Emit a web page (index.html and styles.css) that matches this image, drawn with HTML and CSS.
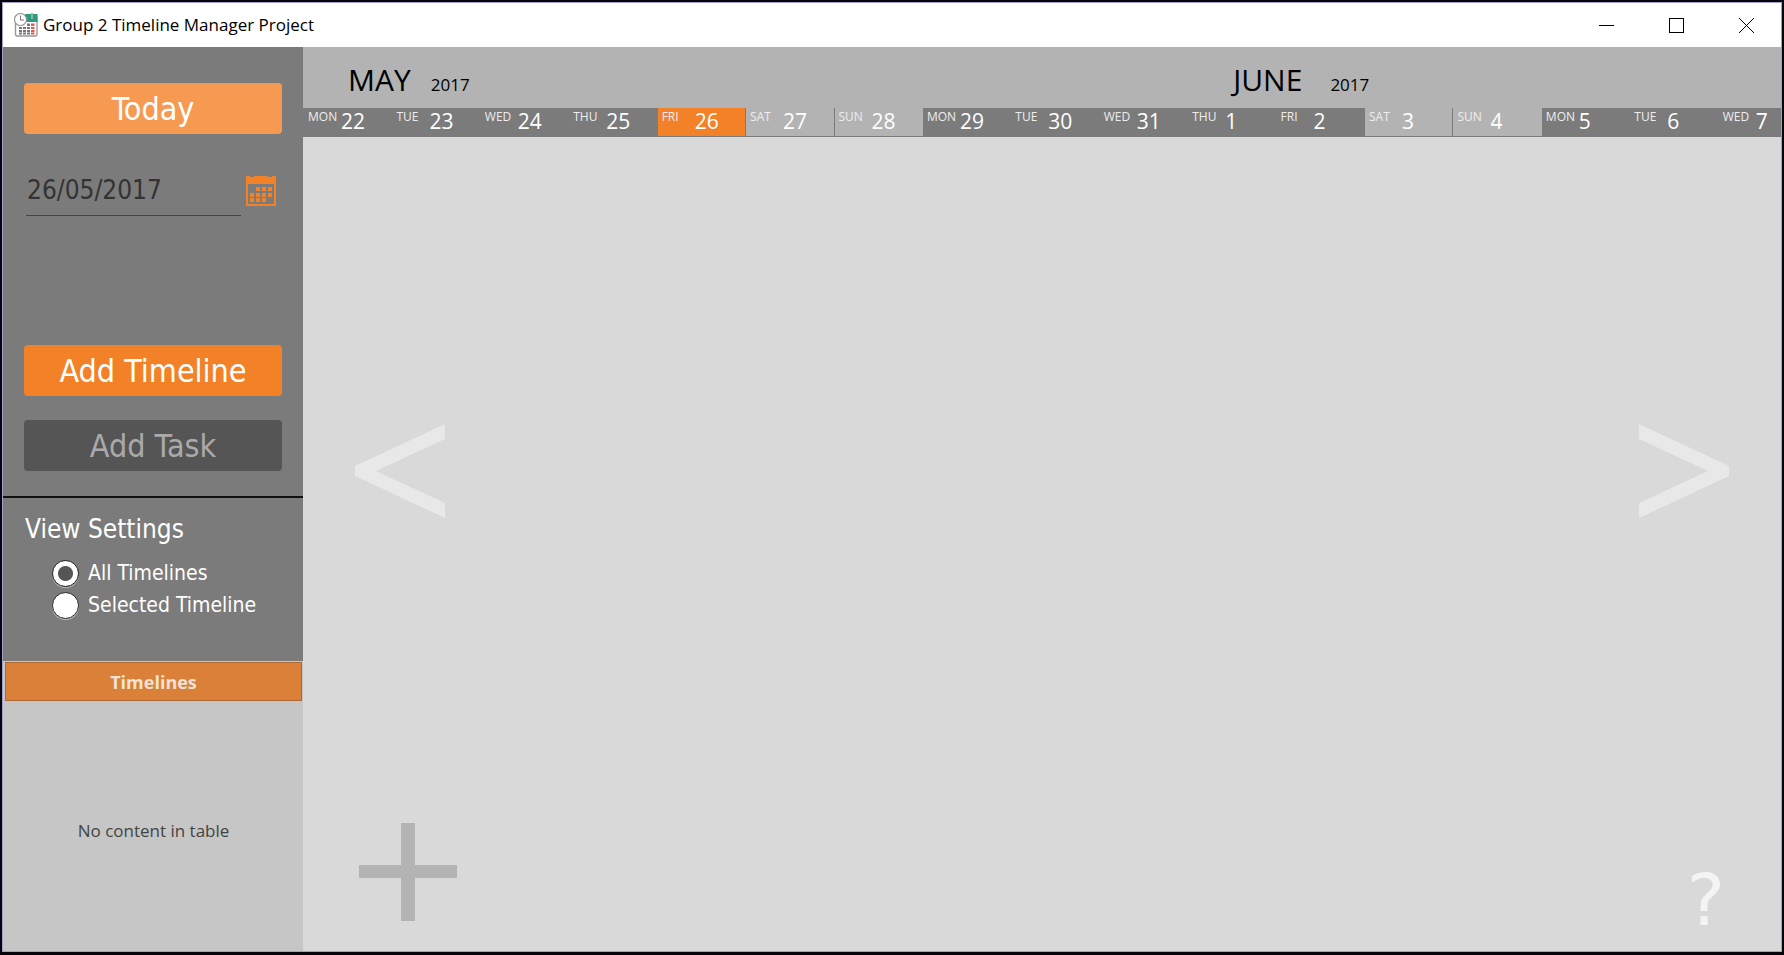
FILE: index.html
```html
<!DOCTYPE html>
<html lang="en">
<head>
<meta charset="utf-8">
<title>Group 2 Timeline Manager Project</title>
<link rel="stylesheet" href="styles.css">
</head>
<body>
<div class="window">
  <header class="titlebar">
    <svg class="app-icon" viewBox="0 0 24 24" aria-hidden="true">
      <rect x="1.5" y="3" width="21.5" height="20" rx="1.5" fill="#fff" stroke="#999" stroke-width="1.4"/>
      <path d="M11 1h12.500v8H11z" fill="#2a9b7c"/>
      <path d="M17 0h2v6h-2z" fill="#8fb5a9"/>
      <path d="M5 14h3v2H5zM9 14h3v2H9zM13 14h3v2h-3zM5 17h3v2H5zM9 17h3v2H9zM13 17h3v2h-3zM5 19.500h3v2H5zM9 19.500h3v2H9zM13 19.500h3v2h-3zM13 10.500h3v2.500h-3z" fill="#777"/>
      <path d="M17 10.500h3.500v2.500H17zM17 14h3.500v2H17zM17 17h3.500v2H17zM17 19.500h3.500v2H17z" fill="#e05a4f"/>
      <circle cx="6.500" cy="6.500" r="6" fill="#fff" stroke="#999" stroke-width="1.2"/>
      <path d="M6.500 2.500v4.500H10" fill="none" stroke="#777"/>
    </svg>
    <h1 class="title">Group 2 Timeline Manager Project</h1>
    <div class="window-controls">
      <button class="window-button" aria-label="Minimize"><svg viewBox="0 0 15 15" shape-rendering="crispEdges"><path d="M0 7.5h15"/></svg></button>
      <button class="window-button" aria-label="Maximize"><svg viewBox="0 0 15 15" shape-rendering="crispEdges"><path d="M.5.5h14v14H.5z"/></svg></button>
      <button class="window-button" aria-label="Close"><svg viewBox="0 0 15 15"><path d="M0 0l15 15M15 0L0 15"/></svg></button>
    </div>
  </header>
  <div class="body">
    <aside class="sidebar">
      <section class="actions">
        <button class="action today">Today</button>
        <div class="date-picker">
          <input class="date" type="text" value="26/05/2017" aria-label="Date">
          <button class="calendar" aria-label="Open calendar">
            <svg viewBox="0 0 30 30"><path fill="#f38127" fill-rule="evenodd" d="M0 0h4v1h4V0h14v1h4V0h4v30H0zM2 8v20h26V8zM10 11h4v4h-4zM16 11h4v4h-4zM22 11h4v4h-4zM4 17h4v4H4zM10 17h4v4h-4zM16 17h4v4h-4zM22 17h4v4h-4zM4 22h4v4H4zM10 22h4v4h-4zM16 22h4v4h-4z"/></svg>
          </button>
        </div>
        <button class="action add-timeline">Add Timeline</button>
        <button class="action" disabled>Add Task</button>
      </section>
      <fieldset class="settings">
        <legend class="legend">View Settings</legend>
        <label class="option"><input class="radio" type="radio" name="view" checked>All Timelines</label>
        <label class="option"><input class="radio" type="radio" name="view">Selected Timeline</label>
      </fieldset>
      <table class="timelines">
        <thead><tr><th>Timelines</th></tr></thead>
        <tbody><tr><td>No content in table</td></tr></tbody>
      </table>
    </aside>
    <main class="main">
      <div class="months columns">
        <h2 class="month may">MAY <span class="year">2017</span></h2>
        <h2 class="month june">JUNE <span class="year">2017</span></h2>
      </div>
      <ol class="days columns">
        <li class="day"><span class="weekday">MON</span>22</li>
        <li class="day"><span class="weekday">TUE</span>23</li>
        <li class="day"><span class="weekday">WED</span>24</li>
        <li class="day"><span class="weekday">THU</span>25</li>
        <li class="day current"><span class="weekday">FRI</span>26</li>
        <li class="day weekend"><span class="weekday">SAT</span>27</li>
        <li class="day weekend"><span class="weekday">SUN</span>28</li>
        <li class="day"><span class="weekday">MON</span>29</li>
        <li class="day"><span class="weekday">TUE</span>30</li>
        <li class="day"><span class="weekday">WED</span>31</li>
        <li class="day"><span class="weekday">THU</span>1</li>
        <li class="day"><span class="weekday">FRI</span>2</li>
        <li class="day weekend"><span class="weekday">SAT</span>3</li>
        <li class="day weekend"><span class="weekday">SUN</span>4</li>
        <li class="day"><span class="weekday">MON</span>5</li>
        <li class="day"><span class="weekday">TUE</span>6</li>
        <li class="day"><span class="weekday">WED</span>7</li>
      </ol>
      <div class="canvas">
        <div class="pager">
          <button class="arrow" aria-label="Previous"><svg viewBox="0 0 90 96"><path d="M90 1v15L21 48l69 32v15L0 53V43z"/></svg></button>
          <button class="arrow" aria-label="Next"><svg viewBox="0 0 90 96"><path d="M0 1v15l69 32L0 80v15l90-42V43z"/></svg></button>
        </div>
        <div class="tools">
          <button class="add" aria-label="Add"><svg viewBox="0 0 98 98"><path d="M42 0h14v42h42v13H56v43H42V55H0V42h42z"/></svg></button>
          <button class="help">?</button>
        </div>
      </div>
    </main>
  </div>
</div>
</body>
</html>
```
FILE: styles.css
```css
* { box-sizing: border-box; }
body {
  margin: 0;
  padding: 2px 2px 3px;
  height: 100vh;
  background: #05050a;
  font-family: "Open Sans", "Noto Sans", sans-serif;
}
button {
  border: 0;
  padding: 0;
  background: none;
  font-family: inherit;
}
svg { display: block; }
h1, h2 { margin: 0; font-weight: 400; }
.window {
  height: 100%;
  display: flex;
  flex-direction: column;
  border: 1px solid #a49fd0;
}
.titlebar {
  flex: none;
  display: flex;
  align-items: center;
  height: 44px;
  padding-left: 11px;
  background: #fff;
}
.app-icon { width: 24px; height: 24px; margin-right: 5px; }
.title { flex: 1; font-size: 17px; line-height: 24px; color: #000; }
.window-controls { display: flex; height: 100%; }
.window-button {
  width: 70px;
  display: flex;
  align-items: center;
  justify-content: center;
}
.window-button svg { width: 15px; height: 15px; fill: none; stroke: #000; }
.body { flex: 1; min-height: 0; display: flex; }
.sidebar {
  flex: none;
  width: 300px;
  display: flex;
  flex-direction: column;
  background: #7b7b7b;
  font-family: "DejaVu Sans Condensed", "Noto Sans", sans-serif;
}
.actions {
  display: flex;
  flex-direction: column;
  padding: 36px 21px 25px;
  border-bottom: 2px solid #111;
}
.action {
  height: 51px;
  margin-bottom: 24px;
  border-radius: 4px;
  font-size: 32px;
  line-height: 40px;
  color: #fff;
  background: #f38127;
}
.action:last-child { margin-bottom: 0; }
.action.today { background: #f79a51; margin-bottom: 35px; }
.action:disabled { background: #555; color: #aaa; }
.date-picker {
  display: flex;
  align-items: center;
  gap: 5px;
  padding-right: 6px;
  margin-bottom: 129px;
}
.date {
  flex: 1;
  min-width: 0;
  height: 47px;
  margin-left: 2px;
  padding: 0 1px 4px;
  border: 0;
  border-bottom: 1px solid #444;
  background: none;
  font-family: inherit;
  font-size: 26px;
  color: #333;
}
.calendar { width: 30px; padding-bottom: 4px; }
.settings {
  height: 163px;
  margin: 0;
  border: 0;
  padding: 12px 22px;
  color: #fff;
}
.legend { float: left; width: 100%; padding: 0; margin-bottom: 9px; font-size: 26px; line-height: 38px; }
.option {
  clear: both;
  display: flex;
  align-items: center;
  height: 32px;
  padding-left: 27px;
  font-size: 21px;
  line-height: 28px;
}
.radio {
  appearance: none;
  width: 27px;
  height: 27px;
  margin: 0 9px 0 0;
  border: 1px solid #222;
  border-radius: 50%;
  background: #fff;
  box-shadow: 0 1px 0 #bbb;
}
.radio:checked { background: radial-gradient(circle, #555 7px, #fff 8px); }
.timelines {
  flex: 1;
  width: 100%;
  display: flex;
  flex-direction: column;
  padding: 1px 1px 1px 2px;
  background: #c6c6c6;
  font-family: "Open Sans", "Noto Sans", sans-serif;
}
.timelines thead, .timelines tr, .timelines th { display: block; }
.timelines th {
  height: 39px;
  border: 1px solid #ad6a34;
  padding: 0;
  background: #da8038;
  color: #f0e2d6;
  font-size: 18px;
  line-height: 38px;
}
.timelines tbody { flex: 1; display: flex; align-items: center; justify-content: center; }
.timelines td { display: block; padding: 0; color: #444; font-size: 17px; line-height: 24px; margin-top: 10px; }
.main {
  flex: 1;
  min-width: 0;
  display: flex;
  flex-direction: column;
  background: #d9d9d9;
}
.columns {
  display: grid;
  grid-template-columns: repeat(16, minmax(0, 88fr)) minmax(0, 62fr);
  padding-left: 1px;
}
.months { height: 61px; background: #b3b3b3; }
.month {
  display: flex;
  align-items: baseline;
  padding: 14px 0 0 44px;
  font-size: 30px;
  line-height: 38px;
  color: #000;
}
.may { grid-column: 1 / 11; gap: 20px; }
.june { grid-column: 11 / 18; gap: 28px; padding-left: 45px; }
.year { font-size: 17px; }
.days {
  height: 29px;
  margin: 0;
  padding-top: 0;
  list-style: none;
  border-bottom: 1px solid #7b7b7b;
  background: #7b7b7b;
}
.day {
  display: flex;
  padding-left: 4px;
  overflow: hidden;
  font-size: 21px;
  line-height: 27px;
  color: #fff;
}
.weekday { flex: none; width: 33px; font-size: 12px; line-height: 17px; color: #eee; }
.current { background: #f38127; }
.weekend { background: #b3b3b3; }
.current, .weekend:has(+ .weekend) { border-right: 1px solid #7b7b7b; }
.canvas {
  flex: 1;
  display: flex;
  flex-direction: column;
  justify-content: flex-end;
  padding: 0 52px 15px;
}
.pager { display: flex; justify-content: space-between; margin-bottom: 304px; }
.arrow svg { width: 90px; height: 96px; fill: #e8e8e8; }
.tools { display: flex; justify-content: space-between; align-items: flex-end; padding: 0 4px; }
.add { margin-bottom: 15px; }
.add svg { width: 98px; height: 98px; fill: #b3b3b3; }
.help { font-family: "DejaVu Sans", sans-serif; font-size: 72px; line-height: 72px; color: #f4f4f4; }
```
